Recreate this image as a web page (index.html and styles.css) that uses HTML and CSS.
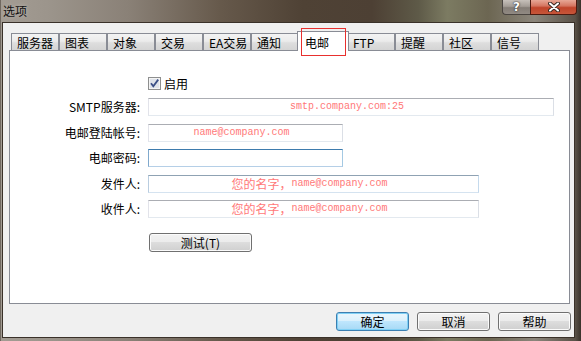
FILE: index.html
```html
<!DOCTYPE html>
<html lang="zh-CN">
<head>
<meta charset="utf-8">
<title>选项</title>
<link rel="stylesheet" href="styles.css">
</head>
<body>
<div class="window">
  <div class="titlebar">
    <span class="title">选项</span>
    <div class="caption">
      <div class="cap-help">?</div>
      <div class="cap-close">
        <svg width="12" height="10" viewBox="0 0 12 10"><path d="M2 1.5 L10 8.5 M10 1.5 L2 8.5" stroke="#3a2a24" stroke-width="4" stroke-linecap="round"/><path d="M2 1.5 L10 8.5 M10 1.5 L2 8.5" stroke="#fff" stroke-width="2" stroke-linecap="round"/></svg>
      </div>
    </div>
  </div>
  <div class="client">
    <div class="tabs">
      <div class="tab">服务器</div>
      <div class="tab">图表</div>
      <div class="tab">对象</div>
      <div class="tab">交易</div>
      <div class="tab">EA交易</div>
      <div class="tab">通知</div>
      <div class="tab selected">电邮<span class="mark"></span></div>
      <div class="tab">FTP</div>
      <div class="tab">提醒</div>
      <div class="tab">社区</div>
      <div class="tab">信号</div>
    </div>
    <div class="panel">
      <div class="row row-check">
        <span class="lbl"></span>
        <span class="check">
          <svg width="13" height="13" viewBox="0 0 13 13"><rect x="0.5" y="0.5" width="12" height="12" fill="#f4f4f4" stroke="#8e8f8f"/><rect x="2" y="2" width="9" height="9" fill="#dfe3ea"/><path d="M3 6.3 L5.3 9.2 L10.2 2.6" fill="none" stroke="#3b4f86" stroke-width="1.8"/></svg>
        </span>
        <span class="check-text">启用</span>
      </div>
      <div class="row r1">
        <span class="lbl">SMTP服务器:</span>
        <span class="tb w-lg">smtp.company.com:25</span>
      </div>
      <div class="row r2">
        <span class="lbl">电邮登陆帐号:</span>
        <span class="tb w-sm">name@company.com</span>
      </div>
      <div class="row r3">
        <span class="lbl">电邮密码:</span>
        <span class="tb w-sm focus"></span>
      </div>
      <div class="row r4">
        <span class="lbl">发件人:</span>
        <span class="tb w-md hover"><span class="cjk">您的名字，</span>name@company.com</span>
      </div>
      <div class="row r5">
        <span class="lbl">收件人:</span>
        <span class="tb w-md"><span class="cjk">您的名字，</span>name@company.com</span>
      </div>
      <div class="row r6">
        <span class="lbl"></span>
        <span class="btn btn-test">测试(T)</span>
      </div>
    </div>
    <div class="footer">
      <span class="btn default">确定</span>
      <span class="btn">取消</span>
      <span class="btn">帮助</span>
    </div>
  </div>
</div>
</body>
</html>
```
FILE: styles.css
```css
* { box-sizing: border-box; margin: 0; padding: 0; }
html, body { width: 581px; height: 341px; overflow: hidden; }
body {
  font: 12px/1 "Noto Sans CJK SC", "Noto Sans", sans-serif;
  color: #000;
  background: #3b332b;
}
.window {
  width: 581px;
  height: 341px;
  display: flex;
  flex-direction: column;
  padding: 0 6px 3px 2px;
  background: linear-gradient(90deg, #3e352d 0px, #a39c93 1px, #9c958c 8%, #8a8177 22%, #66594b 38%, #4f4235 52%, #4d4034 64%, #5e5a48 72%, #7c7b62 77%, #6c6652 84%, #8b857b 92%, #5a5248 99%, #3a322b 100%);
}
.titlebar {
  height: 22px;
  display: flex;
  align-items: flex-start;
  margin-right: -6px;
  margin-left: -2px;
  padding-right: 4px;
  flex: none;
}
.title {
  margin: 4px 0 0 3px;
  font-size: 12px;
  line-height: 13px;
  color: #111;
  text-shadow: 0 0 4px rgba(255,255,255,0.35);
}
.caption { margin-left: auto; display: flex; }
.cap-help {
  width: 28px;
  height: 15px;
  border: 1px solid #4a4541;
  border-top: none;
  border-right: none;
  border-radius: 0 0 0 4px;
  background: linear-gradient(#c6c0ba 0%, #a49d96 45%, #847d76 55%, #918a83 100%);
  color: #fff;
  font: bold 12px/14px "DejaVu Sans", sans-serif;
  text-align: center;
  text-shadow: 0 0 2px #333, 0 0 1px #222;
}
.cap-close {
  width: 47px;
  height: 15px;
  border: 1px solid #4d1a10;
  border-top: none;
  border-radius: 0 0 4px 0;
  background: linear-gradient(#e7a796 0%, #d57661 42%, #c0442a 55%, #c7563a 100%);
  display: flex;
  align-items: center;
  justify-content: center;
}
.client {
  flex: 1;
  background: #f0f0f0;
  border: 1px solid #3a3129;
  display: flex;
  flex-direction: column;
}
.tabs {
  height: 27px;
  display: flex;
  align-items: flex-end;
  padding-left: 8px;
  position: relative;
  z-index: 2;
}
.tab {
  width: 48px;
  height: 17px;
  border: 1px solid #898c95;
  border-bottom: none;
  background: linear-gradient(#f3f3f3 0%, #ebebeb 45%, #dedede 55%, #d4d4d4 100%);
  padding: 2px 0 0 5px;
  font-size: 12px;
  line-height: 14px;
  white-space: nowrap;
}
.tab.selected {
  width: 52px;
  height: 20px;
  margin: 0 -2px -1px;
  background: #fff;
  padding: 4px 0 0 7px;
  position: relative;
  z-index: 3;
}
.mark {
  position: absolute;
  left: 3px;
  top: -4px;
  width: 45px;
  height: 28px;
  border: 1px solid #e8302e;
}
.panel {
  margin-left: 6px;
  width: 561px;
  height: 254px;
  background: #fff;
  border: 1px solid #898c95;
  padding-top: 26px;
  display: flex;
  flex-direction: column;
}
.row { display: flex; align-items: center; height: 18px; }
.row-check { height: 13px; }
.r1 { margin-top: 8px; }
.r2 { margin-top: 8px; }
.r3 { margin-top: 7px; }
.r4 { margin-top: 8px; }
.r5 { margin-top: 7px; }
.r6 { margin-top: 15px; height: 19px; }
.lbl {
  width: 130px;
  margin-right: 8px;
  text-align: right;
  font-size: 12px;
  line-height: 14px;
  flex: none;
}
.check { width: 13px; height: 13px; display: block; }
.check svg { display: block; }
.check-text { margin-left: 3px; line-height: 14px; }
.tb {
  height: 18px;
  border: 1px solid;
  border-color: #abadb3 #dbdfe6 #e3e9ef #e2e3ea;
  background: #fff;
  display: flex;
  align-items: center;
  justify-content: center;
  padding-right: 8px;
  color: #ff7878;
  font: 10px/14px "Liberation Mono", "Noto Sans CJK SC", monospace;
  white-space: nowrap;
}
.tb .cjk { font: 12px/14px "Noto Sans CJK SC", sans-serif; }
.w-lg { width: 406px; }
.w-sm { width: 195px; }
.w-md { width: 331px; }
.tb.focus { border-color: #3d7bad #a4c9e3 #b5cfe7 #80a9cd; }
.tb.hover { border-color: #8fa2b3 #c5daed #d5e3f0 #b9cde0; }
.btn {
  width: 73px;
  height: 19px;
  border: 1px solid #707070;
  border-radius: 3px;
  background: linear-gradient(#f2f2f2 0%, #ebebeb 50%, #dddddd 50%, #cfcfcf 100%);
  box-shadow: inset 0 0 0 1px #fbfbfb;
  display: flex;
  align-items: center;
  justify-content: center;
  font-size: 12px;
  line-height: 14px;
}
.btn-test { width: 103px; margin-left: 1px; }
.btn.default {
  border-color: #3c7fb1;
  background: linear-gradient(#eaf6fd 0%, #d9f0fc 50%, #bee6fd 50%, #a7d9f5 100%);
  box-shadow: inset 0 0 0 1px #7fd0f5;
}
.footer {
  margin-top: 8px;
  display: flex;
  justify-content: flex-end;
  gap: 8px;
  padding-right: 3px;
}
```
